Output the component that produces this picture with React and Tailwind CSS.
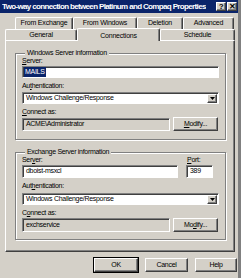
const font = { fontFamily: "'Liberation Sans', Arial, sans-serif" };

function U({ children }) {
  return <span className="underline underline-offset-1">{children}</span>;
}

function Label({ children, className = "" }) {
  return <div className={`h-[8px] leading-[8px] text-[7px] tracking-[-0.3px] text-black ${className}`}>{children}</div>;
}

function Sunken({ className = "", children, gray }) {
  return (
    <div
      className={`border border-t-[#808080] border-l-[#808080] border-r-white border-b-white shadow-[inset_1px_1px_0_#404040] ${
        gray ? "bg-[#d4d0c8]" : "bg-white"
      } flex items-center pl-[3px] text-[7px] tracking-[-0.3px] text-black ${className}`}
    >
      {children}
    </div>
  );
}

function Raised({ className = "", children }) {
  return (
    <div
      className={`border border-t-white border-l-white border-r-[#404040] border-b-[#404040] shadow-[inset_-1px_-1px_0_#808080] bg-[#d4d0c8] flex items-center justify-center text-[7px] tracking-[-0.3px] text-black ${className}`}
    >
      {children}
    </div>
  );
}

function Combo() {
  return (
    <Sunken className="h-[12px] pr-[1px] justify-between">
      <span>Windows Challenge/Response</span>
      <Raised className="w-[10px] h-[9px]">
        <svg width="5" height="3" viewBox="0 0 5 3">
          <path d="M0 0h5L2.5 3z" fill="#000" />
        </svg>
      </Raised>
    </Sunken>
  );
}

function Group({ title, className = "", children }) {
  return (
    <fieldset className={`border border-[#808080] shadow-[inset_1px_1px_0_#fff,1px_1px_0_#fff] px-[6px] ${className}`}>
      <legend className="ml-[3px] px-[2px] h-[8px] leading-[8px] text-[7px] tracking-[-0.3px] text-black bg-[#d4d0c8] relative">
        {title}
      </legend>
      {children}
    </fieldset>
  );
}

function Tab({ w, h, children, selected }) {
  return (
    <div
      className={`${w} ${h} border-t border-l border-t-white border-l-white border-r border-r-[#404040] shadow-[inset_-1px_0_0_#808080] rounded-t-[2px] flex items-center justify-center text-[7px] tracking-[-0.2px] text-black bg-[#d4d0c8] ${
        selected ? "relative z-10 -mb-px items-start pt-[2px]" : ""
      }`}
    >
      {children}
    </div>
  );
}

export default function App() {
  return (
    <div style={font} className="w-[241px] h-[278px] bg-[#d4d0c8] border-r-[3px] border-r-[#808080] flex flex-col overflow-hidden">
      <div className="h-[13px] bg-[#0a246a] flex items-center justify-between pl-[2px] pr-[1px]">
        <span className="min-w-0 overflow-hidden text-white font-bold text-[8px] tracking-[-0.65px] whitespace-nowrap">
          Two-way connection between Platinum and Compaq Properties
        </span>
        <div className="flex gap-[1px] shrink-0">
          <Raised className="w-[10px] h-[9px] font-bold text-[8px]">?</Raised>
          <Raised className="w-[10px] h-[9px] font-bold text-[8px]">✕</Raised>
        </div>
      </div>

      <div className="flex pl-[15px] mt-[4px] h-[12px]">
        <Tab w="w-[58px]" h="h-[12px]">From Exchange</Tab>
        <Tab w="w-[64px]" h="h-[12px]">From Windows</Tab>
        <Tab w="w-[46px]" h="h-[12px]">Deletion</Tab>
        <Tab w="w-[51px]" h="h-[12px]">Advanced</Tab>
      </div>
      <div className="flex items-end pl-[5px] h-[11px]">
        <Tab w="w-[72px]" h="h-[11px]">General</Tab>
        <Tab w="w-[83px]" h="h-[13px]" selected>Connections</Tab>
        <Tab w="w-[75px]" h="h-[11px]">Schedule</Tab>
      </div>

      <div className="ml-[5px] w-[230px] h-[212px] border border-t-white border-l-white border-r-[#404040] border-b-[#404040] shadow-[inset_-1px_-1px_0_#808080] pl-[9px] pr-[8px] pt-[8px]">
        <Group title="Windows Server information" className="pb-[8px]">
          <Label><U>S</U>erver:</Label>
          <Sunken className="mt-[1px] h-[12px]">
            <span className="bg-[#0a246a] text-white px-[1px] -ml-[2px]">MAILS</span>
          </Sunken>
          <Label className="mt-[4px]">Au<U>t</U>hentication:</Label>
          <div className="mt-[2px]">
            <Combo />
          </div>
          <Label className="mt-[4px]"><U>C</U>onnect as:</Label>
          <div className="mt-[2px] flex gap-[3px]">
            <Sunken gray className="w-[148px] h-[13px]">ACME\Administrator</Sunken>
            <Raised className="w-[45px] h-[14px] -mt-px"><U>M</U>odify...</Raised>
          </div>
        </Group>

        <Group title="Exchange Server information" className="mt-[8px] pb-[7px]">
          <div className="flex gap-[8px]">
            <div className="w-[156px]">
              <Label>Ser<U>v</U>er:</Label>
              <Sunken className="mt-[1px] h-[13px]">dboist-msxcl</Sunken>
            </div>
            <div className="w-[27px]">
              <Label className="pl-[1px]"><U>P</U>ort:</Label>
              <Sunken className="mt-[1px] h-[13px]">389</Sunken>
            </div>
          </div>
          <Label className="mt-[4px]">Aut<U>h</U>entication:</Label>
          <div className="mt-[3px]">
            <Combo />
          </div>
          <Label className="mt-[4px]">C<U>o</U>nnect as:</Label>
          <div className="mt-[1px] flex gap-[3px]">
            <Sunken gray className="w-[148px] h-[14px]">exchservice</Sunken>
            <Raised className="w-[45px] h-[14px]">Mo<U>d</U>ify...</Raised>
          </div>
        </Group>
      </div>

      <div className="flex justify-end gap-[7px] pr-[1px] mt-[6px]">
        <Raised className="w-[44px] h-[14px] outline outline-1 outline-black">OK</Raised>
        <Raised className="w-[43px] h-[14px]">Cancel</Raised>
        <Raised className="w-[42px] h-[14px]">Help</Raised>
      </div>
    </div>
  );
}
